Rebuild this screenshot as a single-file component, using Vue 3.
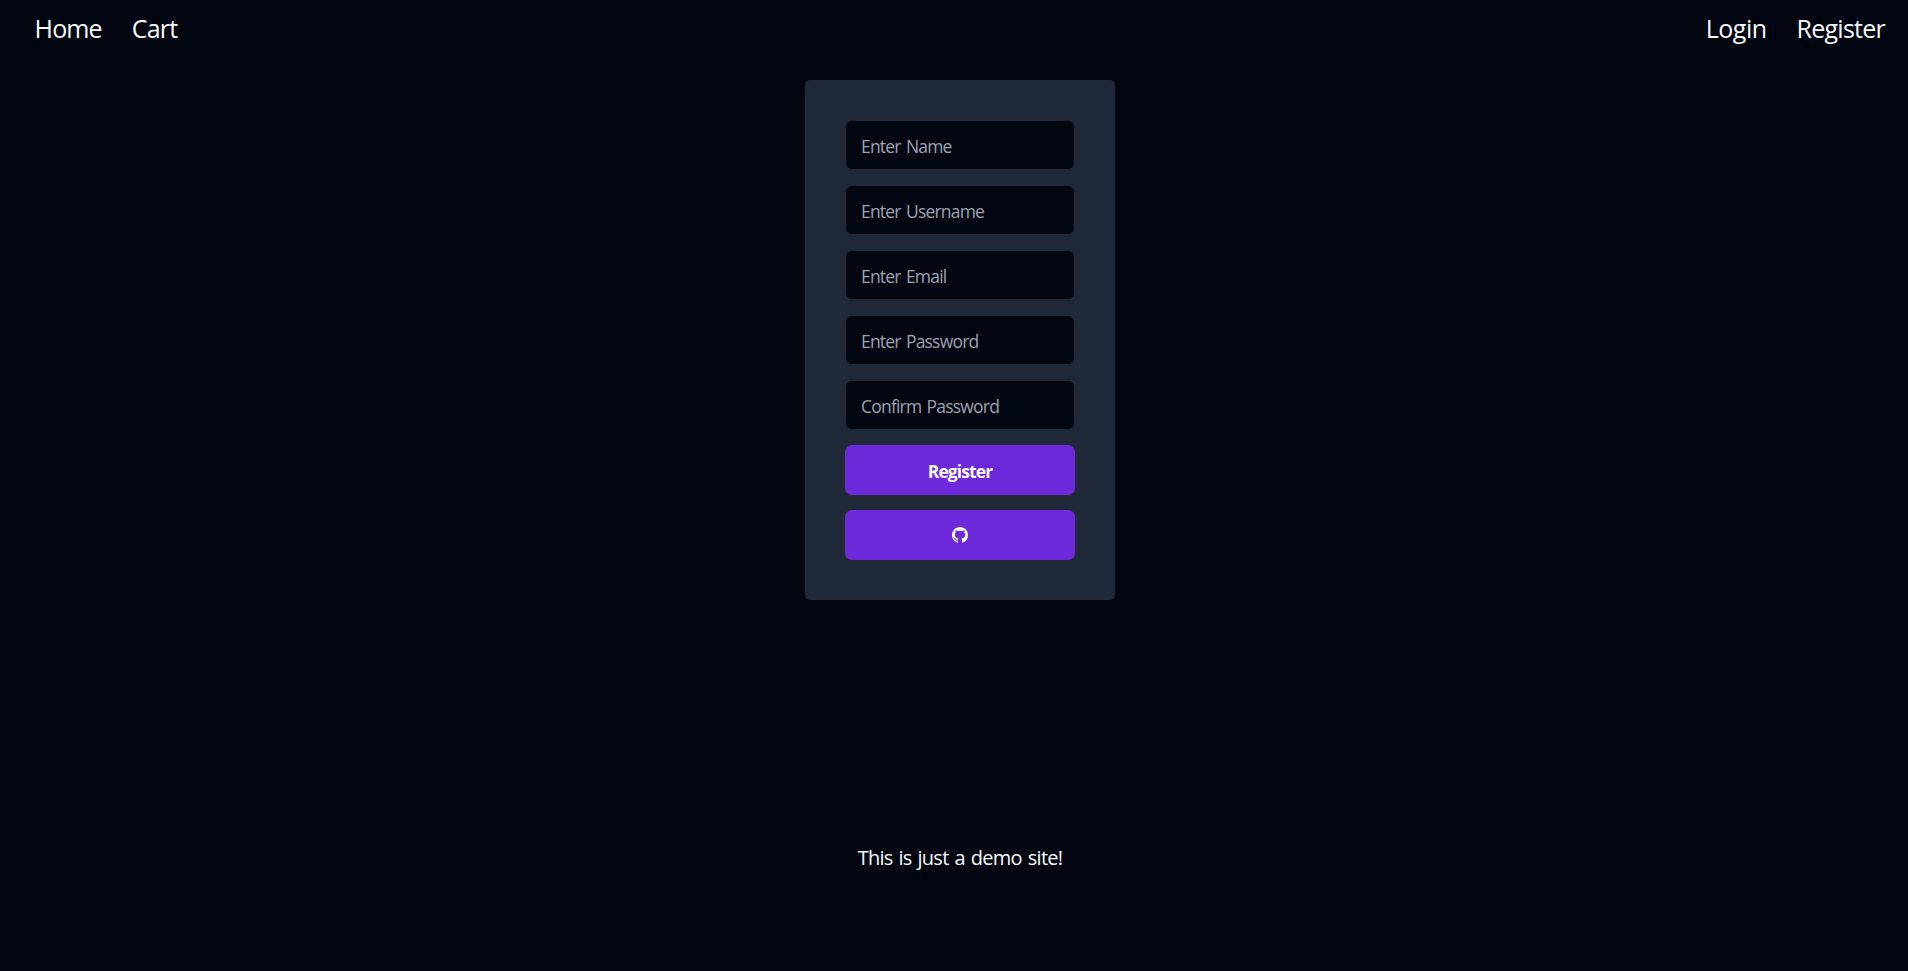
<script setup>
const fields = [
  { label: 'Enter Name', type: 'text', key: 'name' },
  { label: 'Enter Username', type: 'text', key: 'username' },
  { label: 'Enter Email', type: 'email', key: 'email' },
  { label: 'Enter Password', type: 'password', key: 'password' },
  { label: 'Confirm Password', type: 'password', key: 'confirm' },
]
</script>

<template>
  <div class="page">
    <nav class="nav">
      <div class="group left">
        <a class="link home">Home</a>
        <a class="link cart">Cart</a>
      </div>
      <div class="group right">
        <a class="link login">Login</a>
        <a class="link register">Register</a>
      </div>
    </nav>
    <form class="card" @submit.prevent>
      <input
        v-for="field in fields"
        :key="field.key"
        class="field"
        :class="field.key"
        :type="field.type"
        :placeholder="field.label"
      />
      <button class="button" type="submit"><span class="label">Register</span></button>
      <button class="button" type="button" aria-label="GitHub">
        <svg class="icon" viewBox="0 0 16 16" fill="currentColor">
          <path d="M8 0C3.58 0 0 3.58 0 8c0 3.54 2.29 6.53 5.47 7.59.4.07.55-.17.55-.38 0-.19-.01-.82-.01-1.49-2.01.37-2.53-.49-2.69-.94-.09-.23-.48-.94-.82-1.13-.28-.15-.68-.52-.01-.53.63-.01 1.08.58 1.23.82.72 1.21 1.87.87 2.33.66.07-.52.28-.87.51-1.07-1.78-.2-3.64-.89-3.64-3.95 0-.87.31-1.59.82-2.15-.08-.2-.36-1.02.08-2.12 0 0 .67-.21 2.2.82.64-.18 1.32-.27 2-.27s1.36.09 2 .27c1.53-1.04 2.2-.82 2.2-.82.44 1.1.16 1.92.08 2.12.51.56.82 1.27.82 2.15 0 3.07-1.87 3.75-3.65 3.95.29.25.54.73.54 1.48 0 1.07-.01 1.93-.01 2.2 0 .21.15.46.55.38A8.01 8.01 0 0 0 16 8c0-4.42-3.58-8-8-8z" />
        </svg>
      </button>
    </form>
    <footer class="footer"><span class="note">This is just a demo site!</span></footer>
  </div>
</template>

<style>
html,
body {
  background: #020611;
  overflow: hidden;
}
</style>

<style scoped>
.page {
  height: 971px;
  box-sizing: border-box;
  display: flex;
  flex-direction: column;
  align-items: center;
  padding-left: 12px;
  background: #020611;
  color: #f8fafc;
  font-family: "Open Sans", "Noto Sans", sans-serif;
}
.nav {
  align-self: stretch;
  height: 80px;
  box-sizing: border-box;
  display: flex;
  justify-content: space-between;
  padding: 11px 23px 0 22.6px;
}
.group {
  display: flex;
  gap: 30px;
}
.link {
  font-size: 25px;
  line-height: 34px;
  letter-spacing: -0.75px;
}
.home {
  letter-spacing: -0.9px;
}
.login {
  letter-spacing: -0.5px;
}
.card {
  width: 310px;
  height: 520px;
  box-sizing: border-box;
  display: flex;
  flex-direction: column;
  gap: 15px;
  padding: 40px;
  border-radius: 5px;
  background: #1f2937;
}
.field {
  width: 230px;
  height: 50px;
  box-sizing: border-box;
  border: 1px solid #1f2937;
  border-radius: 7px;
  padding: 1px 15px 0;
  outline: none;
  background: #020611;
  color: #f8fafc;
  font-family: inherit;
  font-size: 17.5px;
  letter-spacing: -0.8px;
  word-spacing: 1.5px;
}
.field::placeholder {
  color: #9ca3af;
  opacity: 1;
}
.button {
  width: 230px;
  height: 50px;
  display: flex;
  align-items: center;
  justify-content: center;
  padding: 0;
  border: 0;
  border-radius: 7px;
  background: #6d28d9;
  color: #f8fafc;
  font-family: inherit;
  font-size: 17.5px;
  font-weight: 700;
}
.label {
  padding-top: 1px;
  letter-spacing: -0.9px;
}
.icon {
  width: 16px;
  height: 16px;
}
.footer {
  margin-top: 243px;
  font-size: 20px;
  font-weight: 500;
  line-height: 30px;
}
.note {
  letter-spacing: -0.72px;
  word-spacing: 1.4px;
}
</style>
